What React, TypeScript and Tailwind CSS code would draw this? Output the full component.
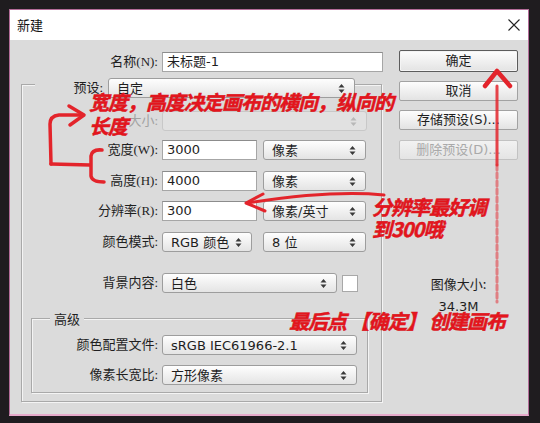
import React from 'react';

const sans = "font-['DejaVu_Sans','Noto_Sans_CJK_SC',sans-serif]";
const lbl = "font-['Liberation_Serif','Noto_Sans_CJK_SC',serif] text-[13px] text-[#1f1f1f] text-right";
const mark =
  "absolute font-['Noto_Sans_CJK_SC',sans-serif] font-bold italic text-[#e5151d] text-[20px] tracking-[-1px] whitespace-nowrap [-webkit-text-stroke:0.5px_#d8121a]";

function UpDown({ faint = false }: { faint?: boolean }) {
  return (
    <svg width="7" height="11" viewBox="0 0 7 11" className="shrink-0">
      <path d="M0.5 4.5 L3.5 1 L6.5 4.5 Z M0.5 6.5 L3.5 10 L6.5 6.5 Z" fill={faint ? '#b8b8b8' : '#3a3a3a'} />
    </svg>
  );
}

function Select({ value, className = '', disabled = false }: { value?: string; className?: string; disabled?: boolean }) {
  return (
    <div
      className={`flex h-[20px] shrink-0 items-center justify-between rounded-[3px] border pl-[8px] pr-[9px] ${
        disabled ? 'border-[#c8c8c8] bg-[#e1e1e1]' : 'border-[#9d9d9d] bg-[linear-gradient(#fefefe,#e4e4e4)]'
      } ${className}`}
    >
      <span className={`${sans} text-[13px] leading-none text-[#1e1e1e]`}>{value}</span>
      <UpDown faint={disabled} />
    </div>
  );
}

function Field({ value, className = '' }: { value: string; className?: string }) {
  return (
    <div
      className={`flex h-[20px] shrink-0 items-center border border-[#a6a6a6] border-t-[#8c8c8c] bg-white pl-[4px] ${sans} text-[13px] text-[#1e1e1e] ${className}`}
    >
      {value}
    </div>
  );
}

function Btn({ children, primary = false, disabled = false, className = '' }: { children: React.ReactNode; primary?: boolean; disabled?: boolean; className?: string }) {
  return (
    <div
      className={`flex items-center justify-center rounded-[2px] border ${sans} text-[13px] ${
        primary
          ? 'h-[22px] border-[#5c5c5c] bg-[linear-gradient(#fdfdfd,#e3e3e3)] text-[#1e1e1e] shadow-[inset_0_0_0_1px_#f4f4f4]'
          : disabled
          ? 'h-[20px] border-[#c2c2c2] bg-[linear-gradient(#f2f2f2,#e4e4e4)] text-[#a9a9a9]'
          : 'h-[20px] border-[#a2a2a2] bg-[linear-gradient(#fdfdfd,#e3e3e3)] text-[#1e1e1e]'
      } ${className}`}
    >
      {children}
    </div>
  );
}

export default function App() {
  return (
    <div className="relative h-[423px] w-[540px] overflow-hidden bg-[#1f1c1f] pt-[9px]">
      <div className="ml-[9px] flex h-[407px] w-[520px] flex-col border border-[#b36c98] border-b-2 border-b-[#e6aacb] bg-[#dbdbdb]">
        {/* title bar */}
        <div className="flex h-[30px] shrink-0 items-center justify-between bg-white pl-[7px] pr-[8px]">
          <span className="font-['Noto_Sans_CJK_SC',sans-serif] text-[13px] text-[#111]">新建</span>
          <svg width="12" height="12" viewBox="0 0 12 12">
            <path d="M0.5 0.5 L11.5 11.5 M11.5 0.5 L0.5 11.5" stroke="#222" strokeWidth="1.1" />
          </svg>
        </div>

        <div className="flex">
          {/* left form */}
          <div className="flex w-[375px] flex-col">
            <div className="mt-[12px] flex h-[20px] items-center gap-[4px]">
              <span className={`${lbl} w-[148px]`}>名称(N):</span>
              <Field value="未标题-1" className="w-[221px]" />
            </div>

            <div className="ml-[11px] mt-[12px] flex h-[318px] w-[361px] flex-col border border-[#a9a9a9] shadow-[inset_1px_1px_0_#f4f4f4,1px_1px_0_#f4f4f4]">
              <div className="-mt-[7px] flex h-[20px] items-center">
                <span className={`${lbl} ml-[13px] w-[73px] bg-[#dbdbdb] pr-[5px]`}>预设:</span>
                <Select value="自定" className="w-[247px]" />
              </div>

              <div className="mt-[13px] flex h-[20px] items-center gap-[4px]">
                <span className={`${lbl} w-[136px] !text-[#a2a2a2]`}>大小:</span>
                <Select disabled className="w-[205px]" />
              </div>

              <div className="mt-[9px] flex h-[20px] items-center gap-[4px]">
                <span className={`${lbl} w-[136px]`}>宽度(W):</span>
                <Field value="3000" className="w-[95px]" />
                <Select value="像素" className="ml-[2px] w-[103px]" />
              </div>

              <div className="mt-[11px] flex h-[20px] items-center gap-[4px]">
                <span className={`${lbl} w-[136px]`}>高度(H):</span>
                <Field value="4000" className="w-[95px]" />
                <Select value="像素" className="ml-[2px] w-[103px]" />
              </div>

              <div className="mt-[10px] flex h-[20px] items-center gap-[4px]">
                <span className={`${lbl} w-[136px]`}>分辨率(R):</span>
                <Field value="300" className="w-[95px]" />
                <Select value="像素/英寸" className="ml-[2px] w-[103px]" />
              </div>

              <div className="mt-[11px] flex h-[20px] items-center gap-[4px]">
                <span className={`${lbl} w-[136px]`}>颜色模式:</span>
                <Select value="RGB 颜色" className="w-[90px]" />
                <Select value="8 位" className="ml-[7px] w-[103px]" />
              </div>

              <div className="mt-[21px] flex h-[20px] items-center gap-[4px]">
                <span className={`${lbl} w-[136px]`}>背景内容:</span>
                <Select value="白色" className="w-[175px]" />
                <div className="ml-[1px] h-[17px] w-[16px] border border-[#a8a8a8] bg-white" />
              </div>

              {/* 高级 */}
              <div className="ml-[9px] mt-[25px] flex h-[75px] w-[337px] flex-col border border-[#a9a9a9] shadow-[inset_1px_1px_0_#f4f4f4,1px_1px_0_#f4f4f4]">
                <span className="-mt-[9px] ml-[18px] h-[17px] self-start bg-[#dbdbdb] px-[4px] font-['Noto_Sans_CJK_SC',sans-serif] text-[13px] leading-[17px] text-[#1f1f1f]">
                  高级
                </span>
                <div className="mt-[8px] flex h-[20px] items-center gap-[4px]">
                  <span className={`${lbl} w-[126px]`}>颜色配置文件:</span>
                  <Select value="sRGB IEC61966-2.1" className="w-[195px]" />
                </div>
                <div className="mt-[10px] flex h-[20px] items-center gap-[4px]">
                  <span className={`${lbl} w-[126px]`}>像素长宽比:</span>
                  <Select value="方形像素" className="w-[195px]" />
                </div>
              </div>
            </div>
          </div>

          {/* right buttons */}
          <div className="ml-[14px] flex w-[119px] flex-col pt-[10px]">
            <Btn primary>确定</Btn>
            <Btn className="mt-[9px]">取消</Btn>
            <Btn className="mt-[9px]">存储预设(S)...</Btn>
            <Btn disabled className="mt-[10px]">删除预设(D)...</Btn>
            <div className="mt-[116px] text-center font-['Noto_Sans_CJK_SC',sans-serif] text-[13px] leading-[16px] text-[#1f1f1f]">图像大小:</div>
            <div className={`mt-[7px] text-center ${sans} text-[13px] leading-[16px] text-[#1f1f1f]`}>34.3M</div>
          </div>
        </div>
      </div>

      {/* red annotations */}
      <svg className="pointer-events-none absolute left-0 top-0" width="540" height="423" viewBox="0 0 540 423" fill="none">
        <g stroke="#e3242b" strokeWidth="3.5" strokeLinecap="round" strokeLinejoin="round">
          <path d="M51 164 L50 124 Q50 116 59 115 L82 115" />
          <path d="M69 106 L84 115 L70 125" />
          <path d="M51 164 L90 165" />
          <path d="M102 150 Q92 149 91 156 L91 176 Q92 182 104 182" />
          <path d="M384 195 Q330 190 248 203" strokeWidth="3" />
          <path d="M263 194 L246 203 L265 211" strokeWidth="3" />
          <path d="M485 86 L497 71 L510 86" strokeWidth="4.5" />
          <path d="M497 86 L497 165" strokeWidth="3" opacity="0.85" />
          <path d="M497 165 L497 302" strokeWidth="3" strokeDasharray="5 3" opacity="0.5" />
        </g>
      </svg>
      <div className={`${mark} left-[89px] top-[90px] leading-[24px]`}>
        宽度，高度决定画布的横向，纵向的
        <br />
        长度
      </div>
      <div className={`${mark} left-[372px] top-[196px] leading-[22px]`}>
        分辨率最好调
        <br />
        到300哦
      </div>
      <div className={`${mark} left-[289px] top-[310px] leading-[22px]`}>最后点 【确定】 创建画布</div>
    </div>
  );
}
